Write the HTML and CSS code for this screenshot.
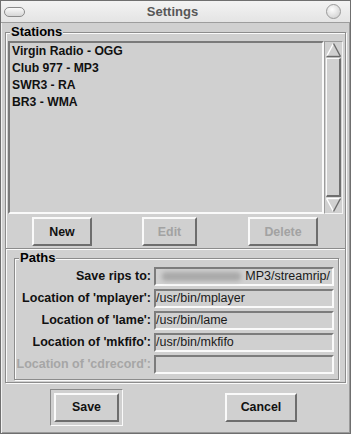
FILE: index.html
```html
<!DOCTYPE html>
<html lang="en">

<head>
   <meta charset="UTF-8">
   <meta name="viewport" content="width=device-width, initial-scale=1.0">
   <title>Settings</title>
   <link rel="stylesheet" href="styles.css">
</head>

<body>
   <div class="window">
      <div class="titlebar">
         <span class="pill"></span>
         <span class="title">Settings</span>
         <span class="knob"></span>
      </div>
      <div class="content">
         <fieldset class="group stations">
            <legend>Stations</legend>
            <div class="listrow">
               <ul class="list">
                  <li>Virgin Radio - OGG</li>
                  <li>Club 977 - MP3</li>
                  <li>SWR3 - RA</li>
                  <li>BR3 - WMA</li>
               </ul>
               <div class="scrollbar">
                  <svg class="arrow" width="17" height="16" viewBox="0 0 17 16">
                     <polygon points="8.5,1.5 1.5,14.5 15.5,14.5" fill="#d0d0d0"/>
                     <line x1="8.5" y1="1.5" x2="1.5" y2="14.5" stroke="#fff" stroke-width="1.4"/>
                     <line x1="8.5" y1="1.5" x2="15.5" y2="14.5" stroke="#6a6a6a" stroke-width="1.4"/>
                     <line x1="1.5" y1="14.5" x2="15.5" y2="14.5" stroke="#6a6a6a" stroke-width="1.4"/>
                  </svg>
                  <div class="thumb"></div>
                  <svg class="arrow" width="17" height="16" viewBox="0 0 17 16">
                     <polygon points="1.5,1.5 15.5,1.5 8.5,14.5" fill="#d0d0d0"/>
                     <line x1="1.5" y1="1.5" x2="15.5" y2="1.5" stroke="#fff" stroke-width="1.4"/>
                     <line x1="1.5" y1="1.5" x2="8.5" y2="14.5" stroke="#fff" stroke-width="1.4"/>
                     <line x1="15.5" y1="1.5" x2="8.5" y2="14.5" stroke="#6a6a6a" stroke-width="1.4"/>
                  </svg>
               </div>
            </div>
            <div class="actions">
               <button class="btn new">New</button>
               <button class="btn edit" disabled>Edit</button>
               <button class="btn delete" disabled>Delete</button>
            </div>
         </fieldset>
         <div class="panel">
            <fieldset class="group paths">
               <legend>Paths</legend>
               <div class="form">
                  <label>Save rips to:</label>
                  <div class="field rips"><span class="blur"></span>MP3/streamrip/</div>
                  <label>Location of 'mplayer':</label>
                  <div class="field">/usr/bin/mplayer</div>
                  <label>Location of 'lame':</label>
                  <div class="field">/usr/bin/lame</div>
                  <label>Location of 'mkfifo':</label>
                  <div class="field">/usr/bin/mkfifo</div>
                  <label class="off">Location of 'cdrecord':</label>
                  <div class="field"></div>
               </div>
            </fieldset>
         </div>
         <div class="footer">
            <div class="ring"><button class="btn save">Save</button></div>
            <button class="btn cancel">Cancel</button>
         </div>
      </div>
   </div>
</body>

</html>
```

FILE: styles.css
```css
* {
   margin: 0;
   padding: 0;
   box-sizing: border-box;
}

body {
   font-family: "Liberation Sans", Arial, sans-serif;
   background: #d0d0d0;
}

.window {
   width: 351px;
   height: 434px;
   display: flex;
   flex-direction: column;
   background: #d0d0d0;
   border: 1px solid #6f6f6f;
   box-shadow: inset 1px 1px 0 #f2f2f2, inset -1px -1px 0 #9a9a9a;
}

.titlebar {
   height: 22px;
   flex: none;
   display: grid;
   grid-template-columns: 1fr auto 1fr;
   align-items: center;
   padding: 0 9px 0 3px;
   background: linear-gradient(#f3f3f3, #e4e4e4);
   border-bottom: 1px solid #9d9d9d;
}

.pill {
   width: 21px;
   height: 10px;
   border: 1px solid #8a8a8a;
   border-radius: 5px;
   background: linear-gradient(#fafafa, #d6d6d6);
   justify-self: start;
}

.title {
   font-size: 13px;
   font-weight: bold;
   color: #575757;
}

.knob {
   width: 15px;
   height: 15px;
   border: 1px solid #9a9a9a;
   border-radius: 50%;
   background: radial-gradient(circle at 40% 35%, #fdfdfd, #c9c9c9);
   justify-self: end;
}

.content {
   flex: 1;
   display: flex;
   flex-direction: column;
   padding: 2px 4px 0 4px;
}

.group {
   border: 1px solid #8c8c8c;
   box-shadow: inset 1px 1px 0 #fafafa, 1px 1px 0 #fafafa;
   min-inline-size: 0;
}

.group legend {
   font-size: 13px;
   line-height: 14px;
   font-weight: bold;
   padding: 0 1px;
   background: #d0d0d0;
}

.stations {
   padding: 2px 2px 2px 2px;
}

.stations legend {
   margin-left: 2px;
}

.listrow {
   display: flex;
   height: 173px;
}

.list {
   width: 316px;
   list-style: none;
   border: 2px solid;
   border-color: #7a7a7a #fafafa #fafafa #7a7a7a;
   padding: 0 2px;
   font-size: 12.2px;
   font-weight: bold;
   line-height: 17px;
   color: #111;
}

.scrollbar {
   width: 19px;
   display: flex;
   flex-direction: column;
   border: 1px solid;
   border-color: #9c9c9c #f4f4f4 #f4f4f4 #9c9c9c;
}

.arrow {
   display: block;
   flex: none;
}

.thumb {
   flex: 1;
   margin: 0 1px;
   border: 1px solid;
   border-width: 1px 2px 2px 1px;
   border-color: #fafafa #6e6e6e #6e6e6e #fafafa;
}

.actions {
   display: flex;
   gap: 50px;
   padding-left: 24px;
   margin-top: 3px;
}

.btn {
   height: 29px;
   border: 2px solid;
   border-color: #fafafa #6d6d6d #6d6d6d #fafafa;
   background: #d0d0d0;
   font-family: "Liberation Sans", Arial, sans-serif;
   font-size: 12.4px;
   font-weight: bold;
   color: #111;
}

.btn:disabled {
   color: #a2a2a2;
}

.new {
   width: 60px;
}

.edit {
   width: 55px;
}

.delete {
   width: 70px;
   margin-left: 1px;
}

.panel {
   margin-top: -1px;
   padding: 2px 6px 2px 8px;
   border: 1px solid #8c8c8c;
   box-shadow: inset 1px 1px 0 #fafafa, 1px 1px 0 #fafafa;
}

.paths {
   padding: 2px 0 5px 0;
}

.paths legend {
   margin-left: 4px;
}

.form {
   display: grid;
   grid-template-columns: 136px 1fr;
   gap: 3px;
   padding-right: 4px;
}

.form label {
   font-size: 12.5px;
   font-weight: bold;
   line-height: 19px;
   text-align: right;
   white-space: nowrap;
   color: #111;
}

.form label.off {
   color: #a6a6a6;
}

.field {
   height: 19px;
   border: 2px solid;
   border-color: #7c7c7c #fafafa #fafafa #7c7c7c;
   font-size: 12.5px;
   line-height: 15px;
   padding-right: 2px;
   color: #1a1a1a;
   white-space: nowrap;
}

.rips {
   display: flex;
   align-items: center;
}

.blur {
   flex: 1;
   height: 9px;
   margin: 0 4px 0 6px;
   background: #a9a9a9;
   border-radius: 4px;
   filter: blur(2px);
}

.footer {
   flex: 1;
   display: flex;
   align-items: center;
   gap: 102px;
   padding: 1px 0 3px 45px;
}

.ring {
   padding: 3px;
   border: 1px solid;
   border-color: #8a8a8a #fafafa #fafafa #8a8a8a;
}

.save {
   display: block;
   width: 65px;
}

.cancel {
   width: 72px;
}
```
